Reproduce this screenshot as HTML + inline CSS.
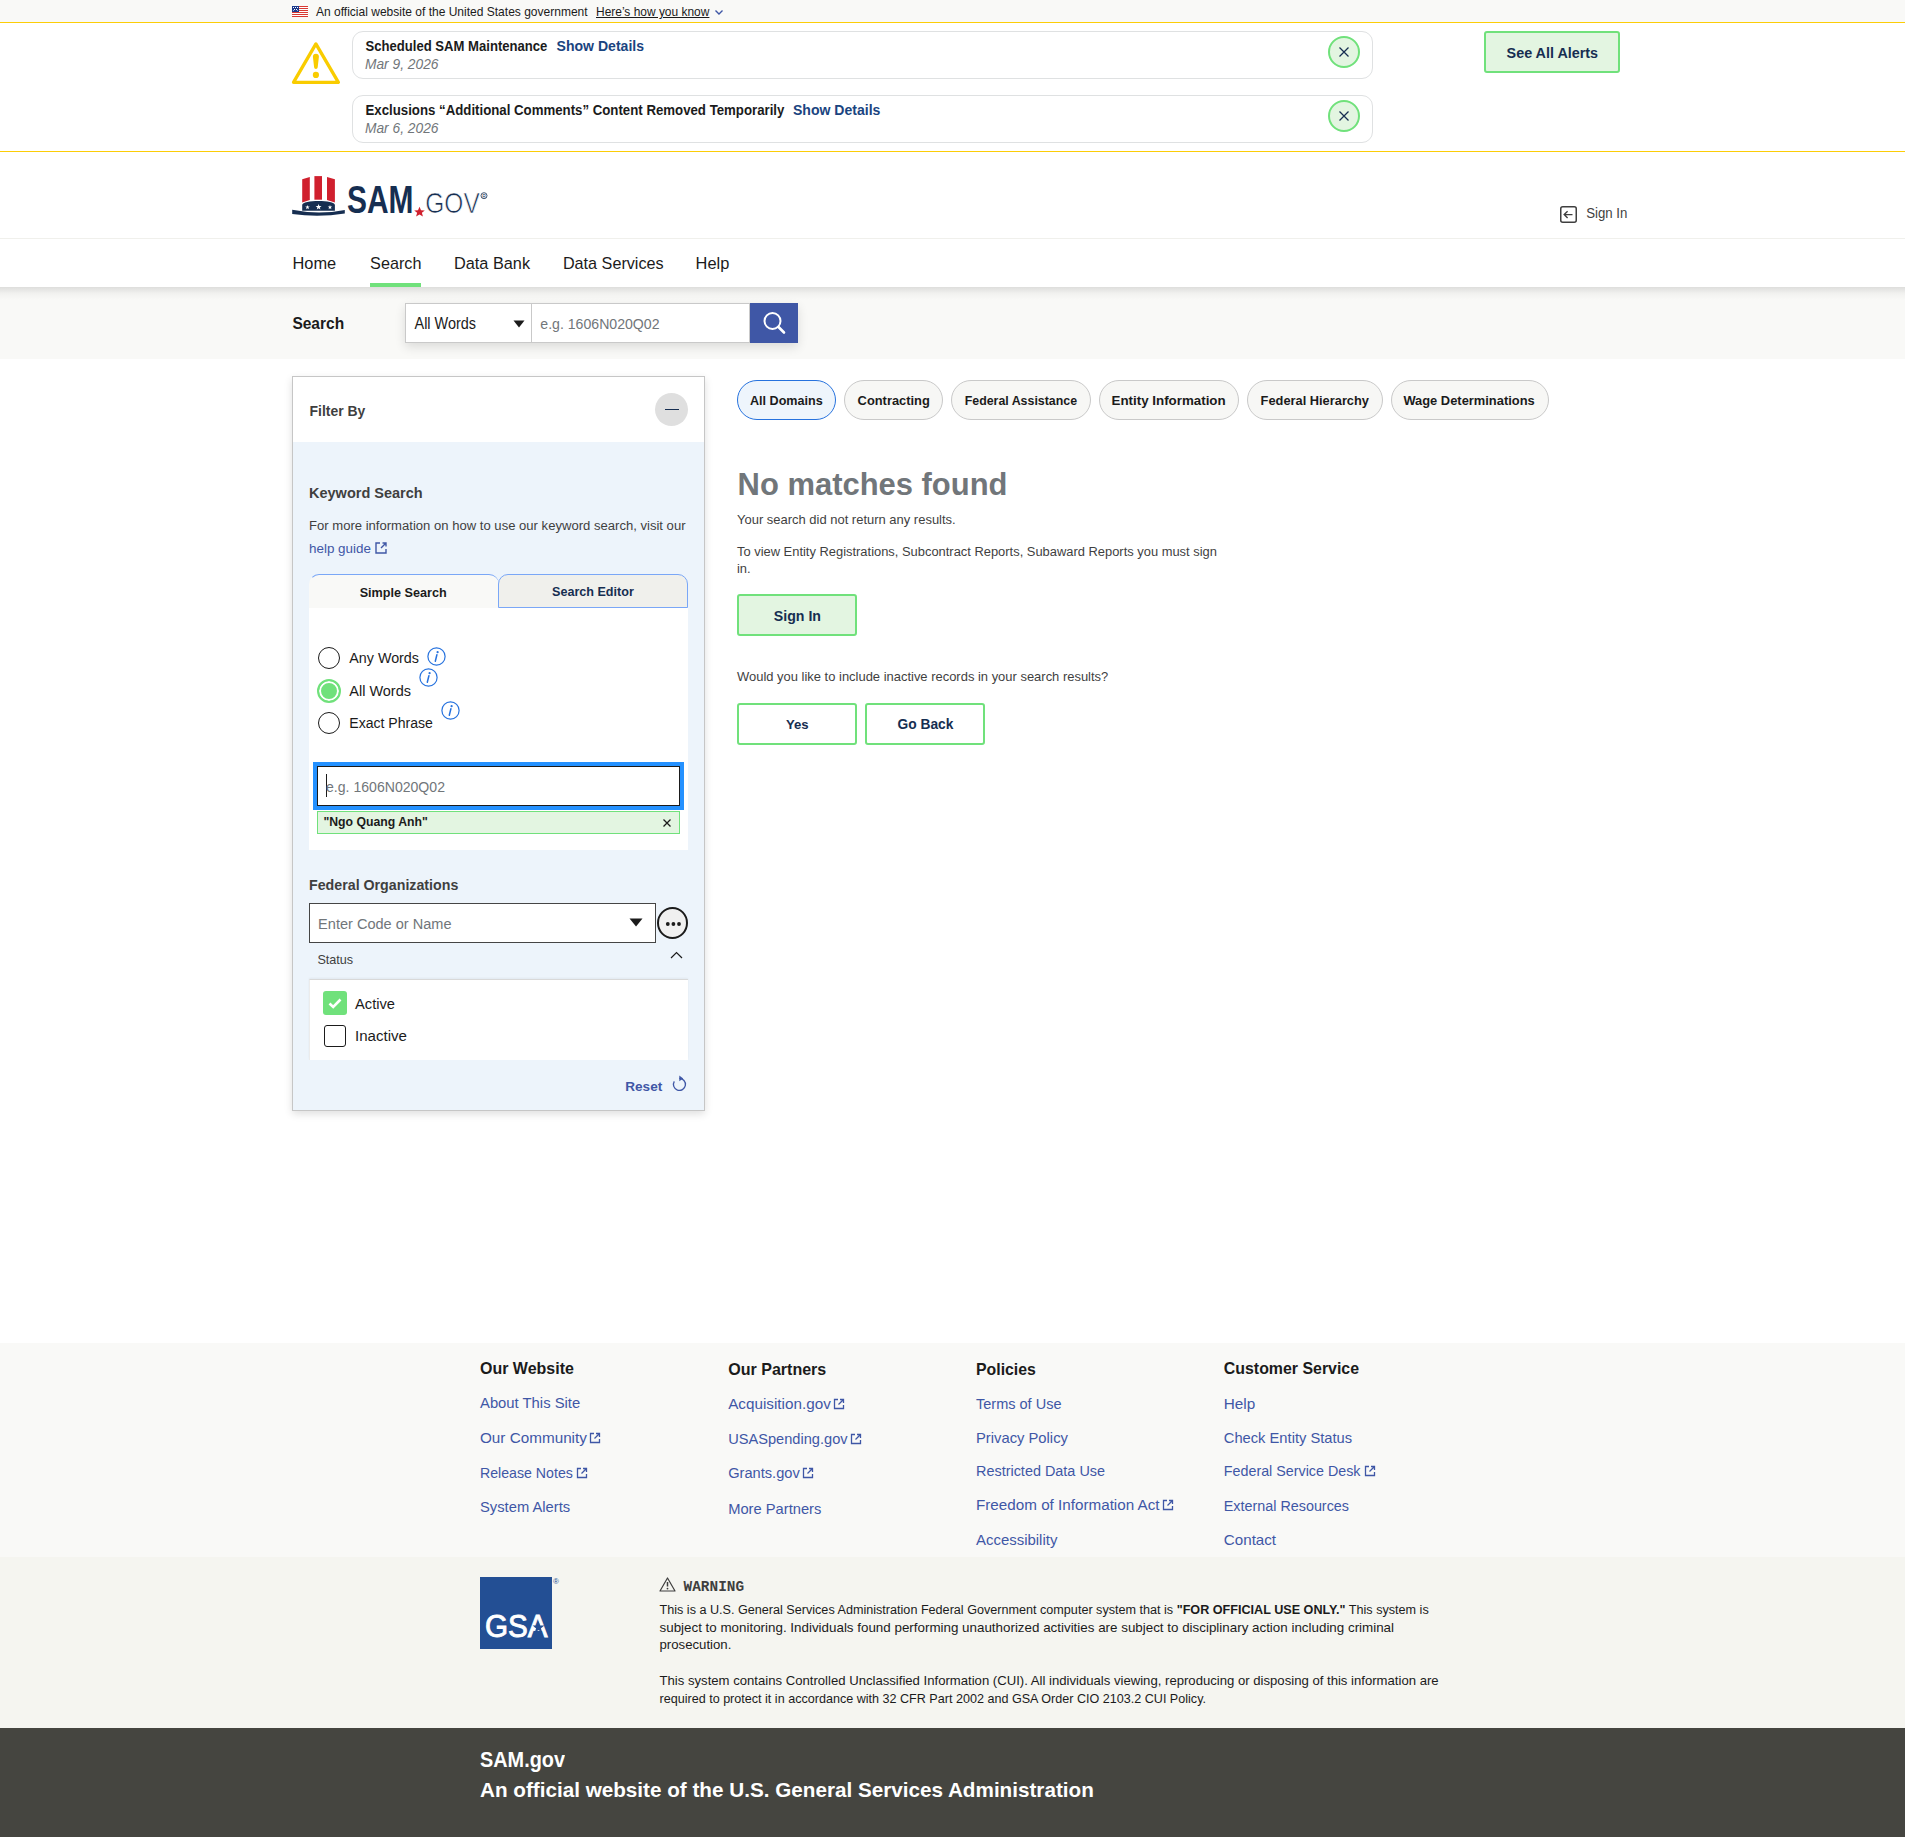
<!DOCTYPE html>
<html lang="en"><head><meta charset="utf-8"><title>SAM.gov</title>
<style>
html,body{margin:0;padding:0;}
body{width:1905px;height:1837px;position:relative;overflow:hidden;background:#fff;font-family:"Liberation Sans",sans-serif;}
.t{position:absolute;white-space:nowrap;}
.b{position:absolute;}
b{font-weight:700;}
</style></head><body>
<div class="b" style="left:0px;top:0px;width:1905px;height:22px;background:#f9f9f7"></div>
<div class="b" style="left:0px;top:22px;width:1905px;height:1px;background:#fccd07"></div>
<svg class="b" style="left:292px;top:6px" width="16" height="11" viewBox="0 0 16 11">
<rect width="16" height="11" fill="#fff"/>
<g fill="#d83933"><rect y="0" width="16" height="1"/><rect y="2" width="16" height="1"/><rect y="4" width="16" height="1"/><rect y="6" width="16" height="1"/><rect y="8" width="16" height="1"/><rect y="10" width="16" height="1"/></g>
<rect width="7" height="6" fill="#1b3a8c"/>
<g fill="#fff"><rect x="1" y="1" width="1" height="1"/><rect x="3" y="1" width="1" height="1"/><rect x="5" y="1" width="1" height="1"/><rect x="2" y="3" width="1" height="1"/><rect x="4" y="3" width="1" height="1"/><rect x="1" y="4" width="1" height="1" opacity=".6"/><rect x="5" y="4" width="1" height="1" opacity=".6"/></g>
</svg>
<div class="t" style="left:316.0px;top:4.93px;font-size:12.03px;line-height:15px;color:#1b1b1b;">An official website of the United States government</div>
<div class="t" style="left:596.0px;top:4.96px;font-size:11.96px;line-height:15px;color:#1b1b1b;text-decoration:underline;text-underline-offset:1px">Here’s how you know</div>
<svg class="b" style="left:714px;top:8px" width="10" height="8" viewBox="0 0 10 8"><path d="M1.5 2.5 L5 6 L8.5 2.5" fill="none" stroke="#3f57a6" stroke-width="1.4"/></svg>
<div class="b" style="left:0px;top:23px;width:1905px;height:128px;background:#fff"></div>
<div class="b" style="left:0px;top:151px;width:1905px;height:1px;background:#fccd07"></div>
<svg class="b" style="left:286px;top:36px" width="60" height="54" viewBox="286 36 60 54">
<path d="M315.9 43.9 L338.4 82.3 L293.5 82.3 Z" fill="none" stroke="#f9cc00" stroke-width="3.3" stroke-linejoin="round"/>
<path d="M312.9 56.8 Q312.9 53.8 315.9 53.8 Q318.9 53.8 318.9 56.8 L317.7 67.3 Q317.6 69.1 315.9 69.1 Q314.2 69.1 314.1 67.3 Z" fill="#f9cc00"/>
<circle cx="315.9" cy="74.9" r="3.1" fill="#f9cc00"/>
</svg>
<div class="b" style="left:352px;top:31px;width:1021px;height:48px;border:1px solid #dfe1e2;border-radius:11px;box-sizing:border-box;background:#fff"></div>
<div class="t" style="left:365.5px;top:38.76px;font-size:13.1px;line-height:16px;font-weight:700;color:#1b1b1b;transform:scaleY(1.08);transform-origin:0 12.54px;">Scheduled SAM Maintenance</div>
<div class="t" style="left:556.6px;top:37.13px;font-size:14.06px;line-height:18px;font-weight:700;color:#1a4480;">Show Details</div>
<div class="t" style="left:365.0px;top:56.13px;font-size:13.77px;line-height:17px;font-style:italic;color:#71767a;">Mar 9, 2026</div>
<div class="b" style="left:1328px;top:36px;width:32px;height:32px;border:2.5px solid #70e17b;background:#e3f5e1;border-radius:50%;box-sizing:border-box"></div>
<svg class="b" style="left:1336px;top:44px" width="16" height="16" viewBox="0 0 16 16"><path d="M3.5 3.5 L12.5 12.5 M12.5 3.5 L3.5 12.5" stroke="#162e51" stroke-width="1.25"/></svg>
<div class="b" style="left:352px;top:95px;width:1021px;height:48px;border:1px solid #dfe1e2;border-radius:11px;box-sizing:border-box;background:#fff"></div>
<div class="t" style="left:365.5px;top:102.21px;font-size:13.24px;line-height:17px;font-weight:700;color:#1b1b1b;transform:scaleY(1.08);transform-origin:0 13.09px;">Exclusions “Additional Comments” Content Removed Temporarily</div>
<div class="t" style="left:793.0px;top:101.13px;font-size:14.06px;line-height:18px;font-weight:700;color:#1a4480;">Show Details</div>
<div class="t" style="left:365.0px;top:120.13px;font-size:13.77px;line-height:17px;font-style:italic;color:#71767a;">Mar 6, 2026</div>
<div class="b" style="left:1328px;top:100px;width:32px;height:32px;border:2.5px solid #70e17b;background:#e3f5e1;border-radius:50%;box-sizing:border-box"></div>
<svg class="b" style="left:1336px;top:108px" width="16" height="16" viewBox="0 0 16 16"><path d="M3.5 3.5 L12.5 12.5 M12.5 3.5 L3.5 12.5" stroke="#162e51" stroke-width="1.25"/></svg>
<div class="b" style="left:1484px;top:31px;width:136px;height:42px;border:2px solid #70e17b;background:#e3f5e1;border-radius:3px;box-sizing:border-box"></div>
<div class="t" style="left:1506.6px;top:44.02px;font-size:14.36px;line-height:18px;font-weight:700;color:#162e51;">See All Alerts</div>
<div class="b" style="left:0px;top:152px;width:1905px;height:86px;background:#fff"></div>
<div class="b" style="left:0px;top:238px;width:1905px;height:1px;background:#f0f0ec"></div>
<svg class="b" style="left:290px;top:174px" width="200" height="44" viewBox="290 174 200 44">
<path d="M302.2 179.3 L309.8 176.9 L309.8 200 L302.2 202.6 Z" fill="#d0202e"/>
<path d="M314.4 176.1 L322 176.1 L322 199.7 L314.4 199.7 Z" fill="#d0202e"/>
<path d="M327 176.9 L334.9 179.3 L334.9 202.6 L327 200 Z" fill="#d0202e"/>
<path d="M302.2 210.7 L302.2 204.9 C302.2 199.8 334.9 199.8 334.9 204.9 L334.9 210.7 Z" fill="#162e51"/>
<path d="M292.2 209.7 Q318.6 215 344.8 209.9 L344.8 213.5 Q318.6 217.9 292.2 214 Z" fill="#162e51"/>
<path d="M307.50 204.90 L308.06 206.52 L309.78 206.56 L308.41 207.60 L308.91 209.24 L307.50 208.26 L306.09 209.24 L306.59 207.60 L305.22 206.56 L306.94 206.52 Z M318.60 203.90 L319.33 206.00 L321.55 206.04 L319.78 207.38 L320.42 209.51 L318.60 208.24 L316.78 209.51 L317.42 207.38 L315.65 206.04 L317.87 206.00 Z M330.00 204.90 L330.56 206.52 L332.28 206.56 L330.91 207.60 L331.41 209.24 L330.00 208.26 L328.59 209.24 L329.09 207.60 L327.72 206.56 L329.44 206.52 Z" fill="#fff"/>
<text x="347" y="213.3" font-family="Liberation Sans" font-weight="700" font-size="39" textLength="66.5" lengthAdjust="spacingAndGlyphs" fill="#162e51">SAM</text>
<path d="M419.5 206.7 L421 210.3 L424.8 210.5 L421.9 212.8 L422.9 216.5 L419.5 214.4 L416.1 216.5 L417.1 212.8 L414.2 210.5 L418 210.3 Z" fill="#d0202e"/>
<text x="425.3" y="213.3" font-family="Liberation Sans" font-weight="400" font-size="29.5" textLength="54.5" lengthAdjust="spacingAndGlyphs" fill="#162e51" stroke="#fff" stroke-width="0.7">GOV</text>
<circle cx="484" cy="195.7" r="3" fill="none" stroke="#162e51" stroke-width="0.8"/>
<text x="482.3" y="197.6" font-family="Liberation Sans" font-size="5" fill="#162e51">R</text>
</svg>
<svg class="b" style="left:1559px;top:205px" width="19" height="19" viewBox="0 0 19 19"><rect x="1.75" y="1.75" width="15.5" height="15.5" rx="2" fill="none" stroke="#3f3f3f" stroke-width="1.5"/><path d="M13.5 9.6 L5.5 9.6 M8.6 6.3 L5.2 9.6 L8.6 12.9" fill="none" stroke="#3f3f3f" stroke-width="1.4"/></svg>
<div class="t" style="left:1586.2px;top:205.02px;font-size:13.23px;line-height:17px;color:#3f3f3f;transform:scaleY(1.12);transform-origin:0 13.08px;">Sign In</div>
<div class="b" style="left:0px;top:239px;width:1905px;height:48px;background:#fff"></div>
<div class="t" style="left:292.5px;top:253.22px;font-size:16.4px;line-height:20px;color:#1b1b1b;">Home</div>
<div class="t" style="left:370.1px;top:253.29px;font-size:16.2px;line-height:20px;color:#1b1b1b;">Search</div>
<div class="t" style="left:454.0px;top:253.25px;font-size:16.3px;line-height:20px;color:#1b1b1b;">Data Bank</div>
<div class="t" style="left:562.9px;top:253.29px;font-size:16.2px;line-height:20px;color:#1b1b1b;">Data Services</div>
<div class="t" style="left:695.6px;top:253.22px;font-size:16.4px;line-height:20px;color:#1b1b1b;">Help</div>
<div class="b" style="left:370px;top:283px;width:51px;height:4px;background:#70e17b"></div>
<div class="b" style="left:0px;top:287px;width:1905px;height:72px;background:#f9f9f7"></div>
<div class="b" style="left:0px;top:287px;width:1905px;height:13px;background:linear-gradient(rgba(0,0,0,0.11),rgba(0,0,0,0.03) 50%,rgba(0,0,0,0))"></div>
<div class="t" style="left:292.4px;top:314.22px;font-size:15.53px;line-height:19px;font-weight:700;color:#1b1b1b;transform:scaleY(1.12);transform-origin:0 14.88px;">Search</div>
<div class="b" style="left:405px;top:303px;width:393px;height:40px;box-shadow:0 4px 10px rgba(0,0,0,0.12)"></div>
<div class="b" style="left:405px;top:303px;width:127px;height:40px;background:#fff;border:1px solid #c9c9c9;box-sizing:border-box"></div>
<div class="t" style="left:414.5px;top:314.90px;font-size:14.44px;line-height:18px;color:#1b1b1b;transform:scaleY(1.08);transform-origin:0 14.00px;">All Words</div>
<svg class="b" style="left:513px;top:320px" width="12" height="8" viewBox="0 0 12 8"><path d="M0.5 0.5 L11.5 0.5 L6 7.5 Z" fill="#1b1b1b"/></svg>
<div class="b" style="left:532px;top:303px;width:218px;height:40px;background:#fff;border:1px solid #c9c9c9;border-left:none;box-sizing:border-box"></div>
<div class="t" style="left:540.3px;top:314.91px;font-size:14.12px;line-height:18px;color:#71767a;transform:scaleY(1.06);transform-origin:0 13.89px;">e.g. 1606N020Q02</div>
<div class="b" style="left:750px;top:303px;width:48px;height:40px;background:#3f57a6"></div>
<svg class="b" style="left:762px;top:310px" width="24" height="26" viewBox="0 0 24 26"><circle cx="10.5" cy="11" r="8" fill="none" stroke="#fff" stroke-width="2"/><path d="M16.5 17 L22 22.5" stroke="#fff" stroke-width="2.6" stroke-linecap="round"/></svg>
<div class="b" style="left:292px;top:376px;width:413px;height:735px;border:1px solid #c6c6c6;box-sizing:border-box;background:#edf4fb;box-shadow:0 3px 8px rgba(0,0,0,0.13)"></div>
<div class="b" style="left:293px;top:377px;width:411px;height:65px;background:#fff"></div>
<div class="t" style="left:309.6px;top:402.67px;font-size:13.95px;line-height:17px;font-weight:700;color:#3f3f3f;">Filter By</div>
<div class="b" style="left:655px;top:393px;width:33px;height:33px;background:#dfdfdf;border-radius:50%"></div>
<div class="b" style="left:665px;top:409px;width:14px;height:1px;background:#162e51"></div>
<div class="t" style="left:309.0px;top:484.17px;font-size:14.51px;line-height:18px;font-weight:700;color:#3f3f3f;">Keyword Search</div>
<div class="t" style="left:309.0px;top:518.46px;font-size:13.09px;line-height:16px;color:#3f3f3f;">For more information on how to use our keyword search, visit our</div>
<div class="t" style="left:309.0px;top:539.85px;font-size:13.43px;line-height:17px;color:#3f57a6;">help guide</div>
<svg class="b" style="left:374px;top:541px" width="14" height="14" viewBox="0 0 14 14"><path d="M6 2 L2 2 L2 12 L12 12 L12 8" fill="none" stroke="#3f57a6" stroke-width="1.4"/><path d="M7 7 L12 2 M8.5 2 L12 2 L12 5.5" fill="none" stroke="#3f57a6" stroke-width="1.4"/></svg>
<div class="b" style="left:309px;top:574px;width:190px;height:34px;background:#f9f9f7;border-top:1px solid #7aa7f7;border-left:1px solid transparent;border-radius:10px 10px 0 0;box-sizing:border-box"></div>
<div class="b" style="left:498px;top:574px;width:190px;height:34px;background:#f0f0ec;border:1px solid #7aa7f7;border-radius:10px 10px 0 0;box-sizing:border-box"></div>
<div class="t" style="left:359.7px;top:585.13px;font-size:12.62px;line-height:16px;font-weight:700;color:#1b1b1b;">Simple Search</div>
<div class="t" style="left:552.0px;top:583.94px;font-size:12.58px;line-height:16px;font-weight:700;color:#162e51;">Search Editor</div>
<div class="b" style="left:309px;top:608px;width:379px;height:242px;background:#fff"></div>
<div class="b" style="left:318px;top:647px;width:22px;height:22px;border-radius:50%;border:1.5px solid #1b1b1b;box-sizing:border-box;background:#fff"></div>
<div class="t" style="left:349.3px;top:649.04px;font-size:14.31px;line-height:18px;color:#1b1b1b;">Any Words</div>
<svg class="b" style="left:426.5px;top:646.5px" width="19" height="19" viewBox="0 0 19 19"><circle cx="9.5" cy="9.5" r="8.6" fill="none" stroke="#2672de" stroke-width="1.2"/><circle cx="10.6" cy="5.2" r="1.1" fill="#2672de"/><path d="M9.9 7.8 L8.3 14.2" stroke="#2672de" stroke-width="1.5" stroke-linecap="round"/></svg>
<div class="b" style="left:317px;top:679px;width:24px;height:24px;border-radius:50%;background:#70e17b;box-shadow:inset 0 0 0 2px #fff;border:2px solid #70e17b;box-sizing:border-box"></div>
<div class="t" style="left:349.3px;top:681.98px;font-size:14.48px;line-height:18px;color:#1b1b1b;">All Words</div>
<svg class="b" style="left:418.5px;top:667.5px" width="19" height="19" viewBox="0 0 19 19"><circle cx="9.5" cy="9.5" r="8.6" fill="none" stroke="#2672de" stroke-width="1.2"/><circle cx="10.6" cy="5.2" r="1.1" fill="#2672de"/><path d="M9.9 7.8 L8.3 14.2" stroke="#2672de" stroke-width="1.5" stroke-linecap="round"/></svg>
<div class="b" style="left:318px;top:712px;width:22px;height:22px;border-radius:50%;border:1.5px solid #1b1b1b;box-sizing:border-box;background:#fff"></div>
<div class="t" style="left:349.3px;top:714.12px;font-size:14.07px;line-height:18px;color:#1b1b1b;">Exact Phrase</div>
<svg class="b" style="left:440.5px;top:700.5px" width="19" height="19" viewBox="0 0 19 19"><circle cx="9.5" cy="9.5" r="8.6" fill="none" stroke="#2672de" stroke-width="1.2"/><circle cx="10.6" cy="5.2" r="1.1" fill="#2672de"/><path d="M9.9 7.8 L8.3 14.2" stroke="#2672de" stroke-width="1.5" stroke-linecap="round"/></svg>
<div class="b" style="left:313px;top:762px;width:371px;height:48px;background:#2491ff"></div>
<div class="b" style="left:317px;top:766px;width:363px;height:40px;background:#fff;border:1px solid #1b1b1b;box-sizing:border-box"></div>
<div class="b" style="left:326px;top:774px;width:1px;height:23px;background:#1b1b1b"></div>
<div class="t" style="left:326.0px;top:777.82px;font-size:14.08px;line-height:18px;color:#71767a;">e.g. 1606N020Q02</div>
<div class="b" style="left:317px;top:811px;width:363px;height:23px;background:#e3f5e1;border:1px solid #70e17b;box-sizing:border-box"></div>
<div class="t" style="left:323.4px;top:815.06px;font-size:12.25px;line-height:15px;font-weight:700;color:#1b1b1b;">"Ngo Quang Anh"</div>
<svg class="b" style="left:662px;top:818px" width="10" height="10" viewBox="0 0 10 10"><path d="M1.5 1.5 L8.5 8.5 M8.5 1.5 L1.5 8.5" stroke="#1b1b1b" stroke-width="1.3"/></svg>
<div class="t" style="left:309.0px;top:876.47px;font-size:14.22px;line-height:18px;font-weight:700;color:#3f3f3f;">Federal Organizations</div>
<div class="b" style="left:309px;top:903px;width:347px;height:40px;background:#fff;border:1.5px solid #454545;box-sizing:border-box"></div>
<div class="t" style="left:318.1px;top:915.15px;font-size:14.56px;line-height:18px;color:#71767a;">Enter Code or Name</div>
<svg class="b" style="left:629px;top:918px" width="14" height="9" viewBox="0 0 14 9"><path d="M0.5 0.5 L13.5 0.5 L7 8.5 Z" fill="#1b1b1b"/></svg>
<div class="b" style="left:657px;top:907px;width:31px;height:32px;border-radius:50%;border:2px solid #1b1b1b;background:#f0f0f0;box-sizing:border-box"></div>
<svg class="b" style="left:663px;top:921px" width="20" height="6" viewBox="0 0 20 6"><circle cx="4.8" cy="3" r="1.9" fill="#1b1b1b"/><circle cx="10.4" cy="3" r="1.9" fill="#1b1b1b"/><circle cx="16" cy="3" r="1.9" fill="#1b1b1b"/></svg>
<div class="t" style="left:317.4px;top:951.52px;font-size:12.63px;line-height:16px;color:#3f3f3f;">Status</div>
<svg class="b" style="left:670px;top:950px" width="13" height="10" viewBox="0 0 13 10"><path d="M1 8 L6.5 2.5 L12 8" fill="none" stroke="#1b1b1b" stroke-width="1.2"/></svg>
<div class="b" style="left:309px;top:979px;width:379px;height:81px;background:#fff;border-top:1px solid #d9d9d9;border-left:1px solid #ececec;box-sizing:border-box;box-shadow:0 -1px 2px rgba(0,0,0,0.05)"></div>
<div class="b" style="left:323px;top:991px;width:24px;height:24px;background:#70e17b;border-radius:3px"></div>
<svg class="b" style="left:323px;top:991px" width="24" height="24" viewBox="0 0 24 24"><path d="M6.5 12.5 L10.2 16 L17.5 8.5" fill="none" stroke="#fff" stroke-width="2.6"/></svg>
<div class="t" style="left:355.0px;top:994.81px;font-size:14.69px;line-height:18px;color:#1b1b1b;">Active</div>
<div class="b" style="left:324px;top:1025px;width:22px;height:22px;border:1.5px solid #1b1b1b;border-radius:3px;box-sizing:border-box;background:#fff"></div>
<div class="t" style="left:355.0px;top:1026.47px;font-size:15.09px;line-height:19px;color:#1b1b1b;">Inactive</div>
<div class="t" style="left:625.3px;top:1077.70px;font-size:13.55px;line-height:17px;font-weight:700;color:#3f57a6;">Reset</div>
<svg class="b" style="left:671px;top:1075px" width="17" height="17" viewBox="0 0 17 17"><path d="M3.3 6.3 A6 6 0 1 0 8.3 3.4" fill="none" stroke="#3f57a6" stroke-width="1.3"/><path d="M8.3 0.6 L12.2 3.4 L8.3 6.2 Z" fill="#3f57a6"/></svg>
<div class="b" style="left:737px;top:380px;width:99px;height:40px;border:1px solid #2672de;background:#eef5fc;border-radius:20px;box-sizing:border-box"></div>
<div class="t" style="left:750.0px;top:393.04px;font-size:12.58px;line-height:16px;font-weight:700;color:#1b1b1b;">All Domains</div>
<div class="b" style="left:844px;top:380px;width:99px;height:40px;border:1px solid #c9c9c9;background:#f7f7f5;border-radius:20px;box-sizing:border-box"></div>
<div class="t" style="left:857.6px;top:392.93px;font-size:12.89px;line-height:16px;font-weight:700;color:#1b1b1b;">Contracting</div>
<div class="b" style="left:951px;top:380px;width:139.5px;height:40px;border:1px solid #c9c9c9;background:#f7f7f5;border-radius:20px;box-sizing:border-box"></div>
<div class="t" style="left:964.7px;top:393.61px;font-size:12.38px;line-height:15px;font-weight:700;color:#1b1b1b;">Federal Assistance</div>
<div class="b" style="left:1099px;top:380px;width:139.5px;height:40px;border:1px solid #c9c9c9;background:#f7f7f5;border-radius:20px;box-sizing:border-box"></div>
<div class="t" style="left:1111.5px;top:392.27px;font-size:13.35px;line-height:17px;font-weight:700;color:#1b1b1b;">Entity Information</div>
<div class="b" style="left:1247px;top:380px;width:135.5px;height:40px;border:1px solid #c9c9c9;background:#f7f7f5;border-radius:20px;box-sizing:border-box"></div>
<div class="t" style="left:1260.6px;top:392.95px;font-size:12.83px;line-height:16px;font-weight:700;color:#1b1b1b;">Federal Hierarchy</div>
<div class="b" style="left:1391px;top:380px;width:158px;height:40px;border:1px solid #c9c9c9;background:#f7f7f5;border-radius:20px;box-sizing:border-box"></div>
<div class="t" style="left:1403.4px;top:392.93px;font-size:12.9px;line-height:16px;font-weight:700;color:#1b1b1b;">Wage Determinations</div>
<div class="t" style="left:737.6px;top:465.48px;font-size:30.94px;line-height:39px;font-weight:700;color:#71767a;">No matches found</div>
<div class="t" style="left:737.0px;top:511.80px;font-size:12.98px;line-height:16px;color:#3f3f3f;">Your search did not return any results.</div>
<div class="t" style="left:737.0px;top:544.02px;font-size:12.92px;line-height:16px;color:#3f3f3f;">To view Entity Registrations, Subcontract Reports, Subaward Reports you must sign</div>
<div class="t" style="left:737.0px;top:561.22px;font-size:12.92px;line-height:16px;color:#3f3f3f;">in.</div>
<div class="b" style="left:737px;top:594px;width:120px;height:42px;border:2px solid #70e17b;background:#e3f5e1;border-radius:3px;box-sizing:border-box"></div>
<div class="t" style="left:773.8px;top:607.09px;font-size:14.16px;line-height:18px;font-weight:700;color:#162e51;">Sign In</div>
<div class="t" style="left:737.0px;top:669.11px;font-size:12.96px;line-height:16px;color:#3f3f3f;">Would you like to include inactive records in your search results?</div>
<div class="b" style="left:737px;top:703px;width:120px;height:42px;border:2px solid #70e17b;background:#fff;border-radius:3px;box-sizing:border-box"></div>
<div class="t" style="left:786.0px;top:717.04px;font-size:13.17px;line-height:16px;font-weight:700;color:#162e51;">Yes</div>
<div class="b" style="left:865px;top:703px;width:120px;height:42px;border:2px solid #70e17b;background:#fff;border-radius:3px;box-sizing:border-box"></div>
<div class="t" style="left:897.5px;top:716.33px;font-size:13.78px;line-height:17px;font-weight:700;color:#162e51;">Go Back</div>
<div class="b" style="left:0px;top:1343px;width:1905px;height:214px;background:#f9f9f7"></div>
<div class="t" style="left:480.0px;top:1359.46px;font-size:15.99px;line-height:20px;font-weight:700;color:#1b1b1b;">Our Website</div>
<div class="t" style="left:480.0px;top:1394.36px;font-size:14.82px;line-height:19px;color:#3f57a6;">About This Site</div>
<div class="t" style="left:480.0px;top:1428.21px;font-size:15.28px;line-height:19px;color:#3f57a6;">Our Community</div>
<svg class="b" style="left:589.0px;top:1432.0px" width="12" height="12" viewBox="0 0 12 12"><path d="M5 1.5 L1.5 1.5 L1.5 10.5 L10.5 10.5 L10.5 7" fill="none" stroke="#3f57a6" stroke-width="1.3"/><path d="M5.5 6.5 L10.5 1.5 M7 1.5 L10.5 1.5 L10.5 5" fill="none" stroke="#3f57a6" stroke-width="1.3"/></svg>
<div class="t" style="left:480.0px;top:1464.09px;font-size:14.16px;line-height:18px;color:#3f57a6;">Release Notes</div>
<svg class="b" style="left:575.5px;top:1467.0px" width="12" height="12" viewBox="0 0 12 12"><path d="M5 1.5 L1.5 1.5 L1.5 10.5 L10.5 10.5 L10.5 7" fill="none" stroke="#3f57a6" stroke-width="1.3"/><path d="M5.5 6.5 L10.5 1.5 M7 1.5 L10.5 1.5 L10.5 5" fill="none" stroke="#3f57a6" stroke-width="1.3"/></svg>
<div class="t" style="left:480.0px;top:1498.29px;font-size:14.76px;line-height:18px;color:#3f57a6;">System Alerts</div>
<div class="t" style="left:728.2px;top:1359.44px;font-size:16.06px;line-height:20px;font-weight:700;color:#1b1b1b;">Our Partners</div>
<div class="t" style="left:728.2px;top:1394.22px;font-size:15.25px;line-height:19px;color:#3f57a6;">Acquisition.gov</div>
<svg class="b" style="left:833.0px;top:1398.0px" width="12" height="12" viewBox="0 0 12 12"><path d="M5 1.5 L1.5 1.5 L1.5 10.5 L10.5 10.5 L10.5 7" fill="none" stroke="#3f57a6" stroke-width="1.3"/><path d="M5.5 6.5 L10.5 1.5 M7 1.5 L10.5 1.5 L10.5 5" fill="none" stroke="#3f57a6" stroke-width="1.3"/></svg>
<div class="t" style="left:728.2px;top:1429.54px;font-size:14.61px;line-height:18px;color:#3f57a6;">USASpending.gov</div>
<svg class="b" style="left:850.0px;top:1432.6px" width="12" height="12" viewBox="0 0 12 12"><path d="M5 1.5 L1.5 1.5 L1.5 10.5 L10.5 10.5 L10.5 7" fill="none" stroke="#3f57a6" stroke-width="1.3"/><path d="M5.5 6.5 L10.5 1.5 M7 1.5 L10.5 1.5 L10.5 5" fill="none" stroke="#3f57a6" stroke-width="1.3"/></svg>
<div class="t" style="left:728.2px;top:1464.33px;font-size:14.64px;line-height:18px;color:#3f57a6;">Grants.gov</div>
<svg class="b" style="left:802.0px;top:1467.4px" width="12" height="12" viewBox="0 0 12 12"><path d="M5 1.5 L1.5 1.5 L1.5 10.5 L10.5 10.5 L10.5 7" fill="none" stroke="#3f57a6" stroke-width="1.3"/><path d="M5.5 6.5 L10.5 1.5 M7 1.5 L10.5 1.5 L10.5 5" fill="none" stroke="#3f57a6" stroke-width="1.3"/></svg>
<div class="t" style="left:728.2px;top:1499.90px;font-size:14.71px;line-height:18px;color:#3f57a6;">More Partners</div>
<div class="t" style="left:976.0px;top:1359.51px;font-size:15.85px;line-height:20px;font-weight:700;color:#1b1b1b;">Policies</div>
<div class="t" style="left:976.0px;top:1394.67px;font-size:14.53px;line-height:18px;color:#3f57a6;">Terms of Use</div>
<div class="t" style="left:976.0px;top:1428.78px;font-size:14.77px;line-height:18px;color:#3f57a6;">Privacy Policy</div>
<div class="t" style="left:976.0px;top:1461.80px;font-size:14.43px;line-height:18px;color:#3f57a6;">Restricted Data Use</div>
<div class="t" style="left:976.0px;top:1495.22px;font-size:15.23px;line-height:19px;color:#3f57a6;">Freedom of Information Act</div>
<svg class="b" style="left:1162.0px;top:1499.0px" width="12" height="12" viewBox="0 0 12 12"><path d="M5 1.5 L1.5 1.5 L1.5 10.5 L10.5 10.5 L10.5 7" fill="none" stroke="#3f57a6" stroke-width="1.3"/><path d="M5.5 6.5 L10.5 1.5 M7 1.5 L10.5 1.5 L10.5 5" fill="none" stroke="#3f57a6" stroke-width="1.3"/></svg>
<div class="t" style="left:976.0px;top:1529.82px;font-size:14.95px;line-height:19px;color:#3f57a6;">Accessibility</div>
<div class="t" style="left:1223.8px;top:1359.48px;font-size:15.92px;line-height:20px;font-weight:700;color:#1b1b1b;">Customer Service</div>
<div class="t" style="left:1223.8px;top:1393.89px;font-size:15.32px;line-height:19px;color:#3f57a6;">Help</div>
<div class="t" style="left:1223.8px;top:1428.80px;font-size:14.71px;line-height:18px;color:#3f57a6;">Check Entity Status</div>
<div class="t" style="left:1223.8px;top:1461.84px;font-size:14.31px;line-height:18px;color:#3f57a6;">Federal Service Desk</div>
<svg class="b" style="left:1364.0px;top:1464.8px" width="12" height="12" viewBox="0 0 12 12"><path d="M5 1.5 L1.5 1.5 L1.5 10.5 L10.5 10.5 L10.5 7" fill="none" stroke="#3f57a6" stroke-width="1.3"/><path d="M5.5 6.5 L10.5 1.5 M7 1.5 L10.5 1.5 L10.5 5" fill="none" stroke="#3f57a6" stroke-width="1.3"/></svg>
<div class="t" style="left:1223.8px;top:1496.73px;font-size:14.35px;line-height:18px;color:#3f57a6;">External Resources</div>
<div class="t" style="left:1223.8px;top:1529.74px;font-size:15.18px;line-height:19px;color:#3f57a6;">Contact</div>
<div class="b" style="left:0px;top:1557px;width:1905px;height:171px;background:#f5f5f0"></div>
<svg class="b" style="left:480px;top:1577px" width="84" height="72" viewBox="0 0 84 72">
<rect x="0" y="0" width="72" height="72" fill="#234f94"/>
<text x="5" y="59.6" font-family="Liberation Sans" font-weight="400" font-size="32" textLength="62.6" lengthAdjust="spacingAndGlyphs" fill="#fff" stroke="#fff" stroke-width="0.9">GSA</text>
<path d="M58.50 44.30 L60.03 48.39 L64.40 48.58 L60.98 51.30 L62.14 55.52 L58.50 53.10 L54.86 55.52 L56.02 51.30 L52.60 48.58 L56.97 48.39 Z" fill="#234f94"/>
<text x="73" y="6.5" font-family="Liberation Sans" font-size="8" fill="#234f94">®</text>
</svg>
<svg class="b" style="left:659px;top:1577px" width="17" height="15" viewBox="0 0 17 15"><path d="M8.5 1 L16 14 L1 14 Z" fill="none" stroke="#3f3f3f" stroke-width="1.2" stroke-linejoin="round"/><path d="M8.5 5 L8.5 9.5" stroke="#3f3f3f" stroke-width="1.5"/><circle cx="8.5" cy="11.6" r="0.9" fill="#3f3f3f"/></svg>
<div class="t" style="left:683.6px;top:1578.16px;font-size:14.4px;line-height:18px;font-weight:700;font-family:'Liberation Mono',sans-serif;color:#3f3f3f;">WARNING</div>
<div class="t" style="left:659.5px;top:1601.63px;font-size:12.62px;line-height:16px;color:#1b1b1b;">This is a U.S. General Services Administration Federal Government computer system that is <b>"FOR OFFICIAL USE ONLY."</b> This system is</div>
<div class="t" style="left:659.5px;top:1618.66px;font-size:13.39px;line-height:17px;color:#1b1b1b;">subject to monitoring. Individuals found performing unauthorized activities are subject to disciplinary action including criminal</div>
<div class="t" style="left:659.5px;top:1637.03px;font-size:13.2px;line-height:16px;color:#1b1b1b;">prosecution.</div>
<div class="t" style="left:659.5px;top:1673.45px;font-size:13.14px;line-height:16px;color:#1b1b1b;">This system contains Controlled Unclassified Information (CUI). All individuals viewing, reproducing or disposing of this information are</div>
<div class="t" style="left:659.5px;top:1691.24px;font-size:12.58px;line-height:16px;color:#1b1b1b;">required to protect it in accordance with 32 CFR Part 2002 and GSA Order CIO 2103.2 CUI Policy.</div>
<div class="b" style="left:0px;top:1728px;width:1905px;height:109px;background:#454540"></div>
<div class="t" style="left:480.0px;top:1748.02px;font-size:19.87px;line-height:25px;font-weight:700;color:#fff;transform:scaleY(1.1);transform-origin:0 19.38px;">SAM.gov</div>
<div class="t" style="left:480.0px;top:1777.43px;font-size:20.68px;line-height:26px;font-weight:700;color:#fff;">An official website of the U.S. General Services Administration</div>
</body></html>
